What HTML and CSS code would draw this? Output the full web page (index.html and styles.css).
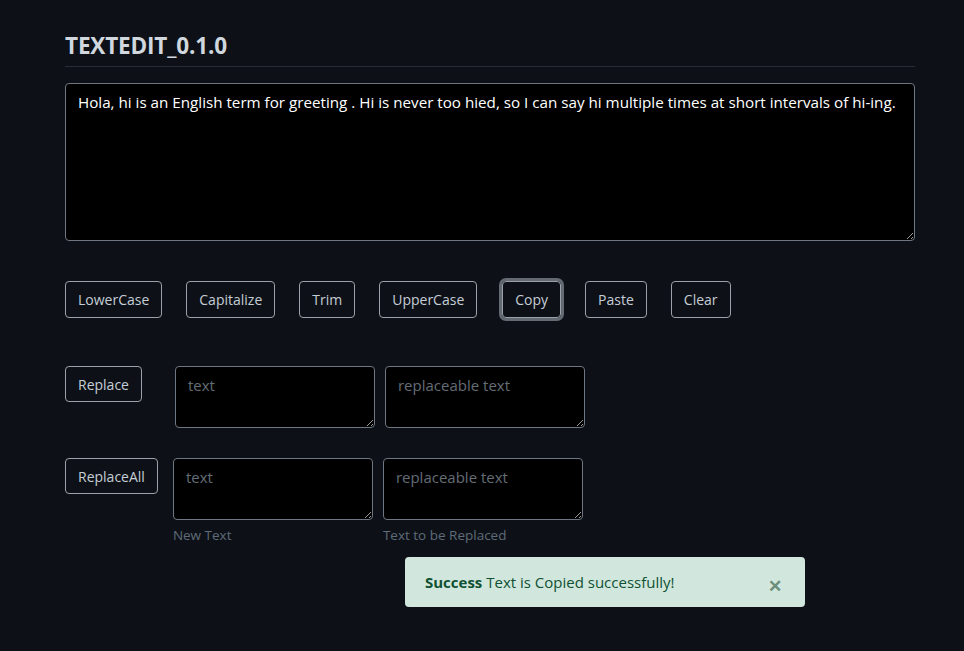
FILE: index.html
```html
<!DOCTYPE html>
<html lang="en">
<head>
<meta charset="utf-8">
<title>TextEdit</title>
<link rel="stylesheet" href="styles.css">
</head>
<body>
<div class="container">
  <h1 class="title">TEXTEDIT_0.1.0</h1>
  <div class="rule"></div>
  <textarea class="main-text" spellcheck="false">Hola, hi is an English term for greeting . Hi is never too hied, so I can say hi multiple times at short intervals of hi-ing.</textarea>
  <div class="actions">
    <button class="btn">LowerCase</button>
    <button class="btn">Capitalize</button>
    <button class="btn">Trim</button>
    <button class="btn">UpperCase</button>
    <button class="btn focus">Copy</button>
    <button class="btn">Paste</button>
    <button class="btn">Clear</button>
  </div>
  <div class="replace-row first">
    <button class="btn small">Replace</button>
    <div class="fields">
      <textarea class="field" placeholder="text"></textarea>
      <textarea class="field" placeholder="replaceable text"></textarea>
    </div>
  </div>
  <div class="replace-row second">
    <button class="btn small">ReplaceAll</button>
    <div class="fields">
      <div class="col">
        <textarea class="field" placeholder="text"></textarea>
        <span class="hint">New Text</span>
      </div>
      <div class="col">
        <textarea class="field" placeholder="replaceable text"></textarea>
        <span class="hint">Text to be Replaced</span>
      </div>
    </div>
  </div>
  <div class="toast-wrap">
    <div class="toast"><span class="msg"><strong>Success</strong> Text is Copied successfully!</span><span class="close">&#x2715;</span></div>
  </div>
</div>
</body>
</html>
```
FILE: styles.css
```css
html, body {
  margin: 0;
  background: #0d1117;
}
body {
  font-family: "Open Sans", "Noto Sans", sans-serif;
  color: #c9d1d9;
  height: 651px;
  overflow: hidden;
}
.container {
  width: 850px;
  padding-left: 65px;
  padding-top: 30px;
}
.title {
  margin: 0;
  font-size: 22.6px;
  font-weight: 700;
  line-height: 32px;
  color: #d0d7de;
  letter-spacing: -0.2px;
}
.rule {
  height: 1px;
  background: #262c35;
  margin-top: 4px;
  margin-bottom: 16px;
}
textarea {
  box-sizing: border-box;
  background: #000;
  color: #fff;
  border: 1px solid #6e7681;
  border-radius: 4px;
  font-family: inherit;
  font-size: 15px;
  line-height: 24px;
  display: block;
  margin: 0;
  outline: none;
}
textarea::placeholder {
  color: #646c75;
}
.main-text {
  width: 850px;
  height: 158px;
  padding: 6px 12px;
  font-size: 15.2px;
}
.actions {
  display: flex;
  gap: 24px;
  margin-top: 40px;
}
.btn {
  box-sizing: border-box;
  height: 37px;
  padding: 1px 12px 0;
  background: transparent;
  color: #c5cdd6;
  border: 1px solid #9aa1a8;
  border-radius: 4px;
  font-family: inherit;
  font-size: 14px;
  line-height: 1;
}
.btn.focus {
  margin-left: 1px;
  box-shadow: 0 0 0 3px #646a71;
}
.btn.small {
  height: 36px;
  flex: none;
}
.replace-row {
  display: flex;
  align-items: flex-start;
}
.replace-row.first {
  margin-top: 48px;
}
.replace-row.first .fields {
  margin-left: 33px;
}
.replace-row.second {
  margin-top: 30px;
}
.replace-row.second .fields {
  margin-left: 15px;
}
.fields {
  display: flex;
  gap: 10px;
}
.col {
  display: flex;
  flex-direction: column;
}
.field {
  width: 200px;
  height: 62px;
  padding: 6px 12px;
}
.hint {
  font-size: 13.5px;
  color: #5f6b78;
  margin-top: 5px;
  line-height: 20px;
}
.toast-wrap {
  display: flex;
  padding-left: 340px;
  margin-top: 12px;
}
.toast {
  box-sizing: border-box;
  width: 400px;
  height: 50px;
  background: #d1e7dd;
  border-radius: 4px;
  color: #0f5132;
  font-size: 15px;
  display: flex;
  align-items: center;
  justify-content: space-between;
  padding: 0 23px 0 20px;
}
.toast strong {
  font-weight: 700;
}
.close {
  color: #6b8e7b;
  font-weight: 700;
  font-size: 17px;
  margin-top: 6px;
}
```
